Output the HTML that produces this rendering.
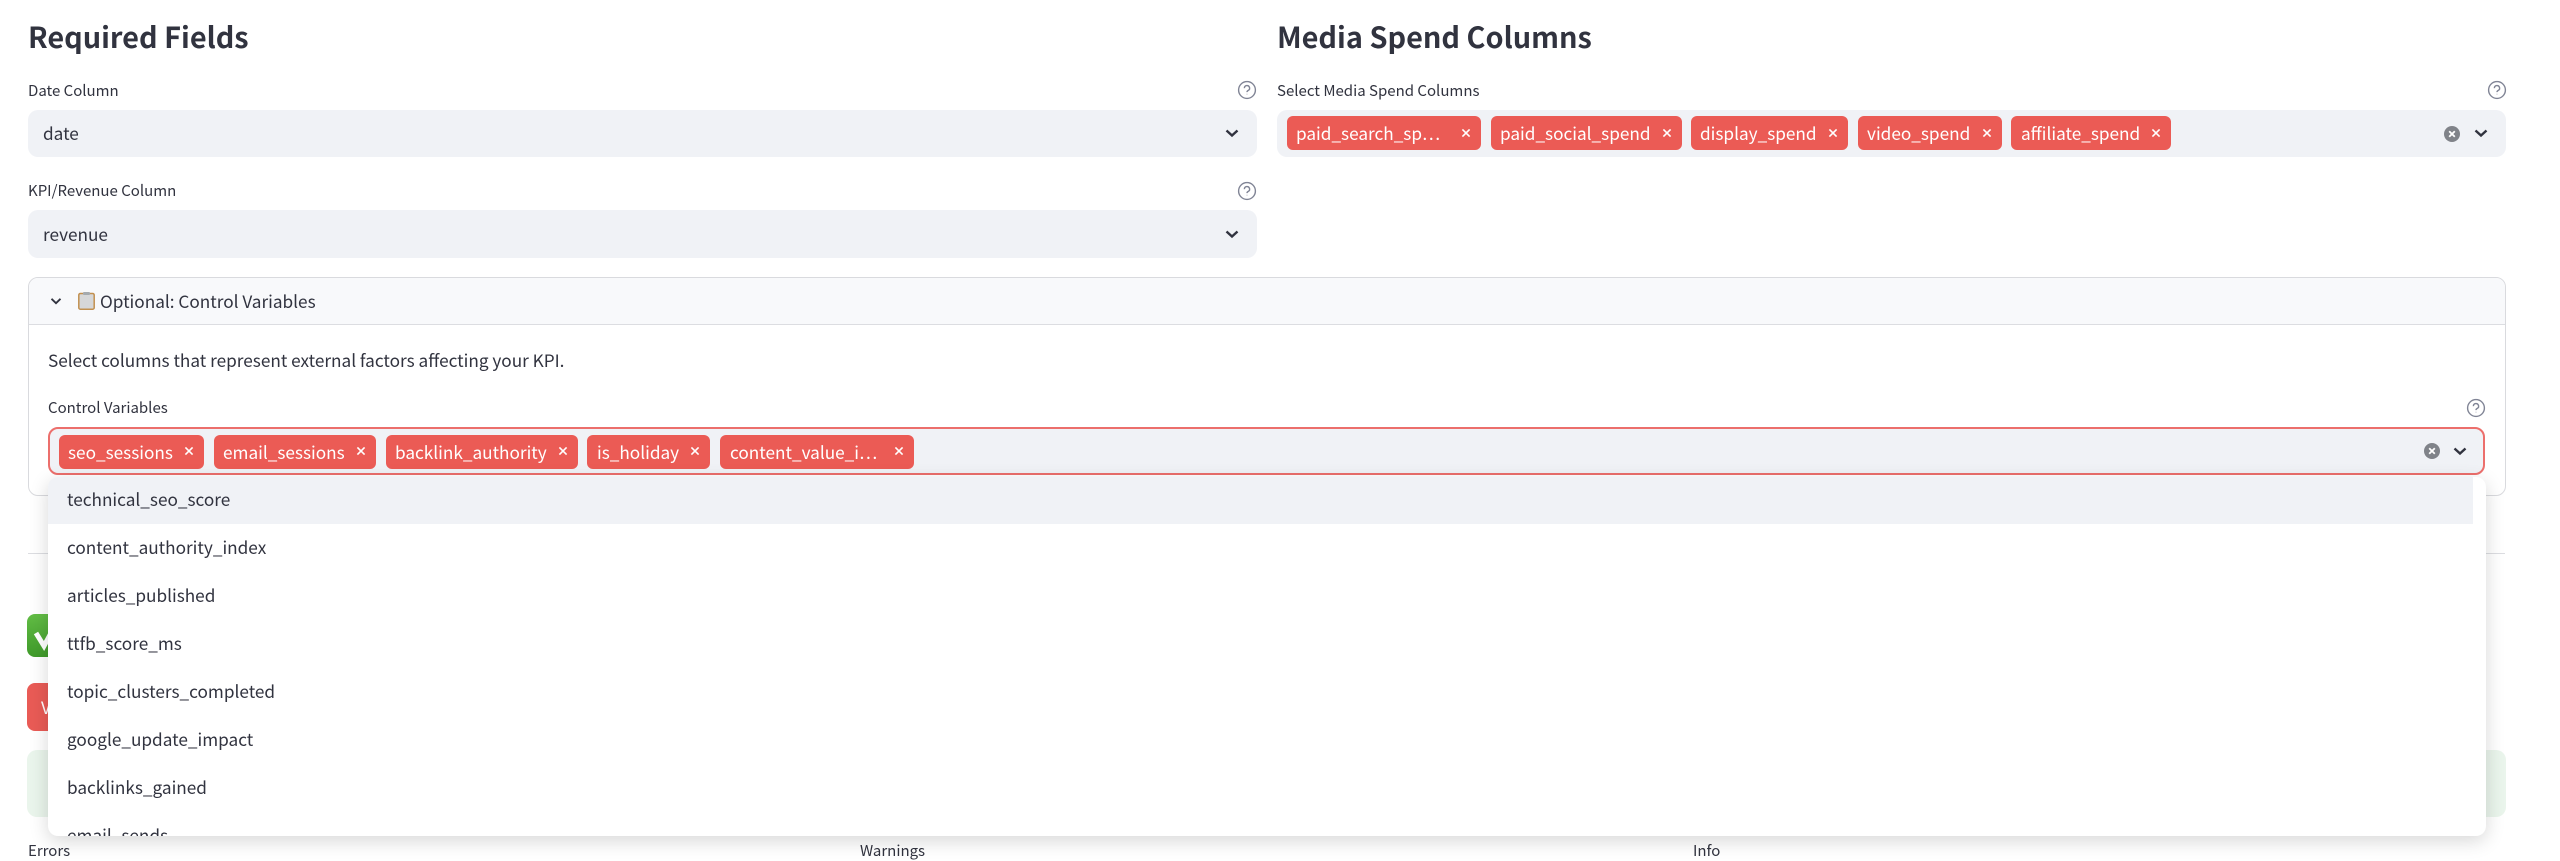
<!DOCTYPE html>
<html><head><meta charset="utf-8"><style>
html,body{margin:0;padding:0;width:2560px;height:861px;overflow:hidden;background:#fff}
body{position:relative;font-family:"Noto Sans CJK JP","Liberation Sans",sans-serif;color:#31333f}
.a{position:absolute}
.t{position:absolute;white-space:nowrap;line-height:30px;height:30px}
.l{font-size:15px}.b{font-size:17.2px}
.h{font-size:28.9px;font-weight:700;line-height:44px;height:44px}
.s{position:absolute;background:#f0f2f6;border-radius:10px;height:48px}
.tag{position:absolute;background:#eb5b55;border-radius:6px;height:34px}
.tt{position:absolute;white-space:nowrap;color:#fff;font-size:17.2px;line-height:34px;height:34px}
svg{position:absolute;overflow:visible}
</style></head><body>
<div class="t h" style="left:28px;top:14px">Required Fields</div>
<div class="t h" style="left:1277px;top:14px">Media Spend Columns</div>
<div class="t l" style="left:28px;top:76px">Date Column</div>
<div class="t l" style="left:1277px;top:76px">Select Media Spend Columns</div>
<div class="t l" style="left:28px;top:176px">KPI/Revenue Column</div>
<svg style="left:1247px;top:90px" width="1" height="1"><circle r="8.4" fill="none" stroke="#808495" stroke-width="1.4"/><path d="M-2.6-1.8a2.6 2.6 0 1 1 3.9 2.2c-.9.5-1.3 1-1.3 1.7M0 3.9v.4" fill="none" stroke="#808495" stroke-width="1.4"/></svg>
<svg style="left:1247px;top:191px" width="1" height="1"><circle r="8.4" fill="none" stroke="#808495" stroke-width="1.4"/><path d="M-2.6-1.8a2.6 2.6 0 1 1 3.9 2.2c-.9.5-1.3 1-1.3 1.7M0 3.9v.4" fill="none" stroke="#808495" stroke-width="1.4"/></svg>
<svg style="left:2497px;top:90px" width="1" height="1"><circle r="8.4" fill="none" stroke="#808495" stroke-width="1.4"/><path d="M-2.6-1.8a2.6 2.6 0 1 1 3.9 2.2c-.9.5-1.3 1-1.3 1.7M0 3.9v.4" fill="none" stroke="#808495" stroke-width="1.4"/></svg>
<div class="s" style="left:28px;top:109.500px;width:1229px;height:47.500px"></div>
<div class="t b" style="left:43px;top:118px">date</div>
<svg style="left:1232px;top:133px" width="1" height="1"><path d="M-5.5-2.5L0 2.5L5.5-2.5" fill="none" stroke="#31333f" stroke-width="2.4"/></svg>
<div class="s" style="left:28px;top:210px;width:1229px"></div>
<div class="t b" style="left:43px;top:219px">revenue</div>
<svg style="left:1232px;top:234px" width="1" height="1"><path d="M-5.5-2.5L0 2.5L5.5-2.5" fill="none" stroke="#31333f" stroke-width="2.4"/></svg>
<div class="s" style="left:1277px;top:109.500px;width:1229px;height:47.500px"></div>
<div class="tag" style="left:1287px;top:116px;width:194px"></div><div class="tt" style="left:1296px;top:116px">paid_search_sp…</div>
<div class="tag" style="left:1491px;top:116px;width:191px"></div><div class="tt" style="left:1500px;top:116px">paid_social_spend</div>
<div class="tag" style="left:1691px;top:116px;width:157px"></div><div class="tt" style="left:1700px;top:116px">display_spend</div>
<div class="tag" style="left:1858px;top:116px;width:144px"></div><div class="tt" style="left:1867px;top:116px">video_spend</div>
<div class="tag" style="left:2011px;top:116px;width:160px"></div><div class="tt" style="left:2021px;top:116px">affiliate_spend</div>
<svg style="left:1466px;top:133px" width="1" height="1"><path d="M-3.6-3.6L3.6 3.6M3.6-3.6L-3.6 3.6" stroke="#fff" stroke-width="1.6"/></svg>
<svg style="left:1667px;top:133px" width="1" height="1"><path d="M-3.6-3.6L3.6 3.6M3.6-3.6L-3.6 3.6" stroke="#fff" stroke-width="1.6"/></svg>
<svg style="left:1833px;top:133px" width="1" height="1"><path d="M-3.6-3.6L3.6 3.6M3.6-3.6L-3.6 3.6" stroke="#fff" stroke-width="1.6"/></svg>
<svg style="left:1987px;top:133px" width="1" height="1"><path d="M-3.6-3.6L3.6 3.6M3.6-3.6L-3.6 3.6" stroke="#fff" stroke-width="1.6"/></svg>
<svg style="left:2156px;top:133px" width="1" height="1"><path d="M-3.6-3.6L3.6 3.6M3.6-3.6L-3.6 3.6" stroke="#fff" stroke-width="1.6"/></svg>
<svg style="left:2452px;top:133.500px" width="1" height="1"><circle r="8" fill="#808389"/><path d="M-2.8-2.8L2.800 2.800M2.800-2.800L-2.800 2.800" stroke="#fff" stroke-width="1.8"/></svg>
<svg style="left:2481px;top:133px" width="1" height="1"><path d="M-5.5-2.5L0 2.5L5.5-2.5" fill="none" stroke="#31333f" stroke-width="2.4"/></svg>

<div class="a" style="left:28px;top:277px;width:2476px;height:217px;border:1px solid #d9dade;border-radius:10px;background:#fff"></div>
<div class="a" style="left:29px;top:278px;width:2476px;height:46px;background:#f8f9fb;border-bottom:1px solid #dcdde1;border-radius:9px 9px 0 0"></div>
<svg style="left:56px;top:301px" width="1" height="1"><path d="M-4.500-2.200L0 2.200L4.500-2.200" fill="none" stroke="#31333f" stroke-width="1.800"/></svg>
<svg style="left:77px;top:291px" width="20" height="20"><rect x="1.800" y="2.500" width="15.400" height="15.700" rx="1.500" fill="#d6d7d8" stroke="#c2904f" stroke-width="1.500"/><rect x="6" y="1" width="7" height="3" rx="1" fill="#a5aaae"/></svg>
<div class="t b" style="left:100px;top:286px">Optional: Control Variables</div>
<div class="t b" style="left:48px;top:345px">Select columns that represent external factors affecting your KPI.</div>
<div class="t l" style="left:48px;top:393px">Control Variables</div>
<svg style="left:2476px;top:408px" width="1" height="1"><circle r="8.4" fill="none" stroke="#808495" stroke-width="1.4"/><path d="M-2.6-1.8a2.6 2.6 0 1 1 3.9 2.2c-.9.5-1.3 1-1.3 1.7M0 3.9v.4" fill="none" stroke="#808495" stroke-width="1.4"/></svg>

<div class="a" style="left:28px;top:553px;width:2477px;height:1px;background:#dcdde1"></div>
<div class="a" style="left:27px;top:614px;width:60px;height:43px;border-radius:8px;background:linear-gradient(#62bd45,#3f9a2a)"></div>
<svg style="left:27px;top:614px" width="30" height="43"><path d="M9 19L17 32L30 8" fill="none" stroke="#fff" stroke-width="5"/></svg>
<div class="a" style="left:27px;top:683px;width:80px;height:48px;border-radius:8px;background:#e95b56"></div>
<div class="tt" style="left:41px;top:690px">V</div>
<div class="a" style="left:27px;top:750px;width:2479px;height:67px;border-radius:10px;background:#eaf5ec"></div>
<div class="t l" style="left:28px;top:836px">Errors</div>
<div class="t l" style="left:860px;top:836px">Warnings</div>
<div class="t l" style="left:1693px;top:836px">Info</div>

<div class="a" style="left:48px;top:427px;width:2433px;height:44px;background:#f0f2f6;border:2px solid #ec6f6c;border-radius:10px"></div>
<div class="tag" style="left:59px;top:434.500px;width:145px"></div><div class="tt" style="left:68px;top:434.500px">seo_sessions</div>
<div class="tag" style="left:214px;top:434.500px;width:162px"></div><div class="tt" style="left:223px;top:434.500px">email_sessions</div>
<div class="tag" style="left:386px;top:434.500px;width:192px"></div><div class="tt" style="left:395px;top:434.500px">backlink_authority</div>
<div class="tag" style="left:587px;top:434.500px;width:123px"></div><div class="tt" style="left:597px;top:434.500px">is_holiday</div>
<div class="tag" style="left:720px;top:434.500px;width:194px"></div><div class="tt" style="left:730px;top:434.500px">content_value_i…</div>
<svg style="left:189px;top:451px" width="1" height="1"><path d="M-3.6-3.6L3.6 3.6M3.6-3.6L-3.6 3.6" stroke="#fff" stroke-width="1.6"/></svg>
<svg style="left:361px;top:451px" width="1" height="1"><path d="M-3.6-3.6L3.6 3.6M3.6-3.6L-3.6 3.6" stroke="#fff" stroke-width="1.6"/></svg>
<svg style="left:562.500px;top:451px" width="1" height="1"><path d="M-3.6-3.6L3.6 3.6M3.6-3.6L-3.6 3.6" stroke="#fff" stroke-width="1.6"/></svg>
<svg style="left:695px;top:451px" width="1" height="1"><path d="M-3.6-3.6L3.6 3.6M3.6-3.6L-3.6 3.6" stroke="#fff" stroke-width="1.6"/></svg>
<svg style="left:898.500px;top:451px" width="1" height="1"><path d="M-3.6-3.6L3.6 3.6M3.6-3.6L-3.6 3.6" stroke="#fff" stroke-width="1.6"/></svg>
<svg style="left:2432px;top:451px" width="1" height="1"><circle r="8" fill="#808389"/><path d="M-2.8-2.8L2.800 2.800M2.800-2.800L-2.800 2.800" stroke="#fff" stroke-width="1.8"/></svg>
<svg style="left:2460px;top:451px" width="1" height="1"><path d="M-5.500-2.500L0 2.500L5.500-2.500" fill="none" stroke="#31333f" stroke-width="2.400"/></svg>

<div class="a" style="left:48px;top:477px;width:2438px;height:359px;background:#fff;border-radius:10px;box-shadow:rgba(0,0,0,.16) 0 5px 19px;overflow:hidden">
<div class="a" style="left:0;top:0;width:2425px;height:47px;background:#f0f2f6"></div>
<div class="t b" style="left:19px;top:7px">technical_seo_score</div>
<div class="t b" style="left:19px;top:55px">content_authority_index</div>
<div class="t b" style="left:19px;top:103px">articles_published</div>
<div class="t b" style="left:19px;top:151px">ttfb_score_ms</div>
<div class="t b" style="left:19px;top:199px">topic_clusters_completed</div>
<div class="t b" style="left:19px;top:247px">google_update_impact</div>
<div class="t b" style="left:19px;top:295px">backlinks_gained</div>
<div class="t b" style="left:19px;top:343px">email_sends</div>
</div>
</body></html>
